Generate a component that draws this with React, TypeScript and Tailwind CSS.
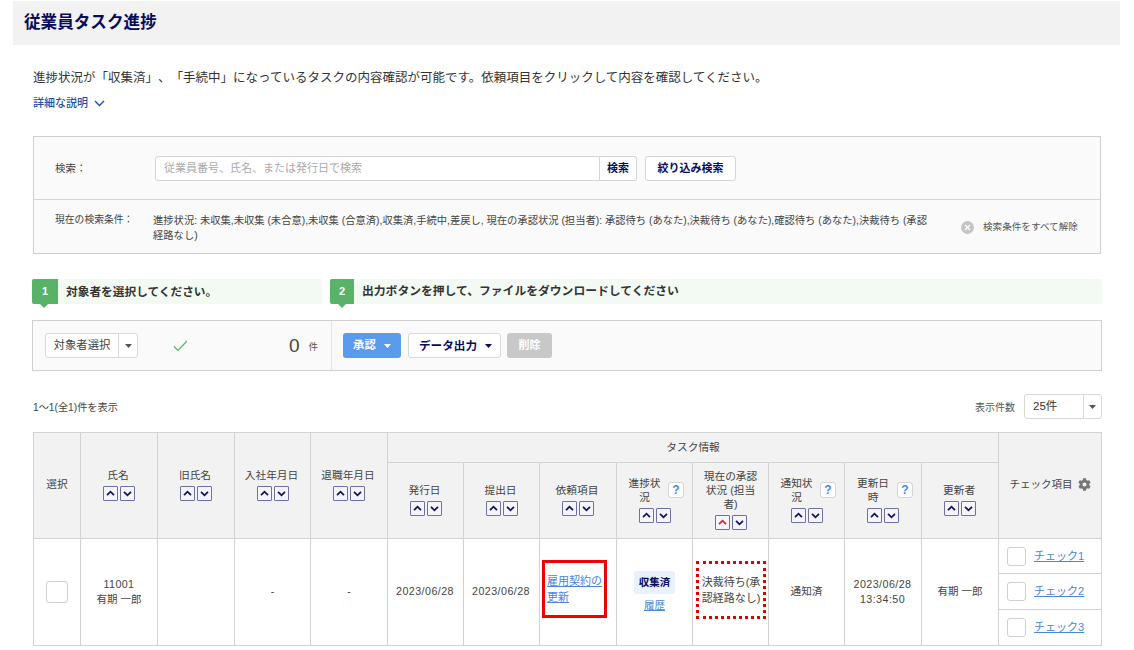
import React from "react";
import { FaCog } from "react-icons/fa";

function Sort({ redUp = false }: { redUp?: boolean }) {
  return (
    <div className="flex justify-center gap-[2px] mt-[4px] mb-[2px]">
      <span className="w-[15px] h-[15px] border border-[#6f6fae] rounded-[1px] bg-[#f4f4fa] flex items-center justify-center">
        <svg width="11" height="11" viewBox="0 0 11 11" fill="none"><path d="M2 7.2 5.500 3.700 9 7.200" stroke={redUp ? "#e0202a" : "#14145f"} strokeWidth="1.8" /></svg>
      </span>
      <span className="w-[15px] h-[15px] border border-[#6f6fae] rounded-[1px] bg-[#f4f4fa] flex items-center justify-center">
        <svg width="11" height="11" viewBox="0 0 11 11" fill="none"><path d="M2 3.800 5.500 7.300 9 3.800" stroke="#14145f" strokeWidth="1.8" /></svg>
      </span>
    </div>
  );
}

function Help() {
  return (
    <span className="w-[16px] h-[16px] shrink-0 border border-[#d5d5d5] rounded-[3px] bg-white flex items-center justify-center text-[#3d8be8] font-bold text-[12px] leading-none">?</span>
  );
}

function Caret({ color = "#555" }: { color?: string }) {
  return (
    <svg width="7" height="4" viewBox="0 0 7 4"><path d="M0 0h7L3.500 4z" fill={color} /></svg>
  );
}

function Head({ label, rowSpan }: { label: React.ReactNode; rowSpan?: number }) {
  return (
    <th rowSpan={rowSpan} className="border border-[#d2d2d2] bg-[#f2f2f2] font-normal text-[10.7px] leading-[14px] text-[#444] text-center align-middle p-0">
      <div className="pr-[2px]">{label}</div>
      <Sort />
    </th>
  );
}

function HelpHead({ label, redUp = false }: { label: React.ReactNode; redUp?: boolean }) {
  return (
    <th className="border border-[#d2d2d2] bg-[#f2f2f2] font-normal text-[10.7px] leading-[14px] text-[#444] text-center align-middle p-0">
      <div className="flex items-center justify-center gap-[4px] px-[8px]">
        <span>{label}</span>
        <Help />
      </div>
      <Sort redUp={redUp} />
    </th>
  );
}

const td = "border border-[#d2d2d2] text-center align-middle text-[10.7px] leading-[15px] text-[#444] p-0";

function Check({ n, last }: { n: number; last?: boolean }) {
  return (
    <div className={`flex items-center h-[35.3px] pl-[8px] gap-[8px] ${last ? "" : "border-b border-[#d2d2d2]"}`}>
      <span className="w-[19px] h-[19px] border border-[#d0d0d0] rounded-[3px] bg-white" />
      <a className="text-[11px] text-[#4a86d8] underline">チェック{n}</a>
    </div>
  );
}

export default function App() {
  return (
    <div className="w-[1134px] h-[650px] overflow-hidden bg-white pt-px text-[#333] [text-spacing-trim:space-all]" style={{ fontFamily: '"Liberation Sans", "Noto Sans CJK JP", sans-serif' }}>
      <div className="ml-[13px] w-[1107px] h-[44px] bg-[#f2f2f2] flex items-center pl-[11px]">
        <h1 className="text-[16.6px] font-bold text-[#0a0a5c] leading-none">従業員タスク進捗</h1>
      </div>

      <div className="ml-[33px] mt-[25px] text-[12.5px] leading-[16px] text-[#333] whitespace-nowrap">
        進捗状況が「収集済」、「手続中」になっているタスクの内容確認が可能です。依頼項目をクリックして内容を確認してください。
      </div>
      <div className="ml-[33px] mt-[10px] flex items-center gap-[6px] text-[11px] leading-[14px] text-[#1f4fa8] font-medium">
        <span>詳細な説明</span>
        <svg width="11" height="7" viewBox="0 0 11 7" fill="none"><path d="M1 1l4.500 4.500L10 1" stroke="#1f4fa8" strokeWidth="1.4" /></svg>
      </div>

      <div className="ml-[33px] mt-[26px] w-[1068px] h-[118px] border border-[#cfcfcf] bg-[#fafafa] flex flex-col">
        <div className="h-[63px] border-b border-[#d5d5d5] flex items-center">
          <span className="w-[121px] pl-[21px] pt-[2px] text-[10.5px] text-[#444]">検索：</span>
          <div className="w-[445px] h-[25px] border border-[#d5d5d5] rounded-l-[3px] bg-white flex items-center pl-[8px] text-[11px] text-[#aaa]">
            従業員番号、氏名、または発行日で検索
          </div>
          <button className="w-[37px] h-[25px] border border-l-0 border-[#d5d5d5] rounded-r-[3px] bg-white text-[11px] font-bold text-[#0a0a5c]">検索</button>
          <button className="ml-[8px] w-[91px] h-[25px] border border-[#d5d5d5] rounded-[3px] bg-white text-[11px] font-bold text-[#0a0a5c]">絞り込み検索</button>
        </div>
        <div className="flex-1 flex">
          <span className="w-[119px] shrink-0 pl-[21px] pt-[13px] text-[9.8px] leading-[14px] text-[#444]">現在の検索条件：</span>
          <p className="w-[775px] shrink-0 pt-[12.5px] text-[10.3px] leading-[15px] text-[#444]">
            進捗状況: 未収集,未収集 (未合意),未収集 (合意済),収集済,手続中,差戻し, 現在の承認状況 (担当者): 承認待ち (あなた),決裁待ち (あなた),確認待ち (あなた),決裁待ち (承認経路なし)
          </p>
          <div className="ml-[33px] pt-[2px] flex items-center gap-[9px] text-[9.6px] text-[#555]">
            <span className="w-[13px] h-[13px] rounded-full bg-[#c4c4c4] flex items-center justify-center">
              <svg width="7" height="7" viewBox="0 0 7 7"><path d="M1 1l5 5M6 1 1 6" stroke="#fff" strokeWidth="1.3" /></svg>
            </span>
            <span>検索条件をすべて解除</span>
          </div>
        </div>
      </div>

      <div className="ml-[32px] mt-[25px] w-[1070px] flex gap-[8px]">
        <div className="w-[290px] h-[25px] bg-[#f3faf3] flex items-center text-[11.7px] font-bold text-[#333]">
          <span className="relative w-[26px] h-[25px] bg-[#58b368] rounded-l-[2px] text-white text-[11px] flex items-center justify-center mr-[8px]">
            1
            <span className="absolute left-[8px] top-[25px] border-x-[4px] border-x-transparent border-t-[4px] border-t-[#58b368]" />
          </span>
          対象者を選択してください。
        </div>
        <div className="flex-1 h-[25px] bg-[#f3faf3] flex items-center text-[11.8px] font-bold text-[#333]">
          <span className="relative w-[24px] h-[25px] bg-[#58b368] rounded-l-[2px] text-white text-[11px] flex items-center justify-center mr-[8px]">
            2
            <span className="absolute left-[8px] top-[25px] border-x-[4px] border-x-transparent border-t-[4px] border-t-[#58b368]" />
          </span>
          出力ボタンを押して、ファイルをダウンロードしてください
        </div>
      </div>

      <div className="ml-[32px] mt-[16px] w-[1070px] h-[51px] border border-[#d0d0d0] bg-[#fafafa] flex items-center">
        <div className="w-[299px] h-full border-r border-[#e3e3e3] flex items-center pl-[12px] shrink-0">
          <div className="w-[93px] h-[25px] border border-[#d8d8d8] rounded-[3px] bg-white flex items-center text-[11.4px] text-[#444]">
            <span className="w-[72px] text-center">対象者選択</span>
            <span className="flex-1 h-full border-l border-[#d8d8d8] flex items-center justify-center"><Caret /></span>
          </div>
          <svg className="ml-[35px]" width="15" height="12" viewBox="0 0 15 12" fill="none"><path d="M1 6.500 5 10.500 14 1" stroke="#58b368" strokeWidth="1.2" /></svg>
          <span className="ml-[101px] text-[19px] leading-none text-[#444]">0</span>
          <span className="ml-[9px] text-[9.5px] text-[#555] mt-[3px]">件</span>
        </div>
        <button className="ml-[11px] w-[58px] h-[25px] rounded-[3px] bg-[#5b9bec] text-white text-[11.400px] font-bold flex items-center justify-center gap-[8px]">
          <span>承認</span><Caret color="#fff" />
        </button>
        <button className="ml-[7px] w-[93px] h-[25px] border border-[#d8d8d8] rounded-[3px] bg-white text-[#0a0a5c] text-[11.6px] font-bold flex items-center justify-center gap-[8px] pl-[2px]">
          <span>データ出力</span><Caret color="#0a0a5c" />
        </button>
        <button className="ml-[6px] w-[45px] h-[25px] rounded-[3px] bg-[#c8c8c8] text-white text-[11px] font-bold">削除</button>
      </div>

      <div className="ml-[33px] mt-[23px] w-[1069px] h-[25px] flex items-center justify-between">
        <span className="pt-[2px] text-[10.2px] text-[#444]">1～1(全1)件を表示</span>
        <div className="flex items-center gap-[9px]">
          <span className="pt-[2px] text-[10px] text-[#555]">表示件数</span>
          <div className="w-[78px] h-[25px] border border-[#d8d8d8] rounded-[3px] bg-white flex items-center text-[11.5px] text-[#333]">
            <span className="w-[58px] pl-[8px]">25件</span>
            <span className="flex-1 h-full border-l border-[#d8d8d8] flex items-center justify-center"><Caret /></span>
          </div>
        </div>
      </div>

      <table className="ml-[33px] mt-[13px] w-[1068px] table-fixed border-collapse">
        <colgroup>
          {[47, 77, 77, 76, 77, 76, 76, 77, 76, 76, 76, 77, 77, 103].map((w, i) => (
            <col key={i} style={{ width: w }} />
          ))}
        </colgroup>
        <thead>
          <tr className="h-[30px]">
            <th rowSpan={2} className="border border-[#d2d2d2] bg-[#f2f2f2] font-normal text-[10.7px] text-[#444] align-middle p-0"><div className="-mt-[3px]">選択</div></th>
            <Head rowSpan={2} label="氏名" />
            <Head rowSpan={2} label="旧氏名" />
            <Head rowSpan={2} label="入社年月日" />
            <Head rowSpan={2} label="退職年月日" />
            <th colSpan={8} className="border border-[#d2d2d2] bg-[#f2f2f2] font-normal text-[10.7px] text-[#444] text-center align-middle p-0">タスク情報</th>
            <th rowSpan={2} className="border border-[#d2d2d2] bg-[#f2f2f2] font-normal text-[10.5px] text-[#444] align-middle p-0">
              <div className="flex items-center justify-center gap-[5px] pb-[2px]">
                <span>チェック項目</span>
                <FaCog className="w-[13px] h-[13px] text-[#777]" />
              </div>
            </th>
          </tr>
          <tr className="h-[76px]">
            <Head label="発行日" />
            <Head label="提出日" />
            <Head label="依頼項目" />
            <HelpHead label="進捗状況" />
            <th className="border border-[#d2d2d2] bg-[#f2f2f2] font-normal text-[10.7px] leading-[14px] text-[#444] text-center align-middle p-0">
              <div className="px-[10px]">現在の承認状況 (担当者)</div>
              <Sort redUp />
            </th>
            <HelpHead label="通知状況" />
            <HelpHead label="更新日時" />
            <Head label="更新者" />
          </tr>
        </thead>
        <tbody>
          <tr className="h-[106px]">
            <td className={td}>
              <span className="inline-block w-[22px] h-[22px] border border-[#d0d0d0] rounded-[3px] bg-white align-middle" />
            </td>
            <td className={td}><span className="tracking-[0.4px]">11001</span><br /><span className="text-[10.5px]">有期 一郎</span></td>
            <td className={td}></td>
            <td className={td}>-</td>
            <td className={td}>-</td>
            <td className={td}><span className="block pr-[1px] tracking-[0.45px]">2023/06/28</span></td>
            <td className={td}><span className="block pr-[1px] tracking-[0.45px]">2023/06/28</span></td>
            <td className={td}>
              <div className="ml-[2px] mb-[6px] w-[65px] h-[58px] border-[3px] border-[#f00000] flex items-center pl-[2px] text-left">
                <a className="text-[#4a86d8] underline text-[11px] leading-[16px]">雇用契約の更新</a>
              </div>
            </td>
            <td className={td}>
              <span className="inline-block w-[41px] h-[23px] leading-[23px] rounded-[3px] bg-[#e8f1fc] text-[#0a0a5c] font-bold text-[10.5px]">収集済</span>
              <a className="block mt-[4px] text-[#4a86d8] underline text-[10.5px] leading-[14px]">履歴</a>
            </td>
            <td className={td}>
              <div className="ml-[3px] mb-[3px] w-[70px] h-[58px] border-[3px] border-dotted border-[#e00000] flex items-center justify-center text-[11px] leading-[16px]">決裁待ち(承認経路なし)</div>
            </td>
            <td className={td}>通知済</td>
            <td className={td}><span className="block pr-[1px] tracking-[0.45px]">2023/06/28<br />13:34:50</span></td>
            <td className={td}><span className="text-[10.5px]">有期 一郎</span></td>
            <td className={td + " align-top"}>
              <Check n={1} />
              <Check n={2} />
              <Check n={3} last />
            </td>
          </tr>
        </tbody>
      </table>
    </div>
  );
}
